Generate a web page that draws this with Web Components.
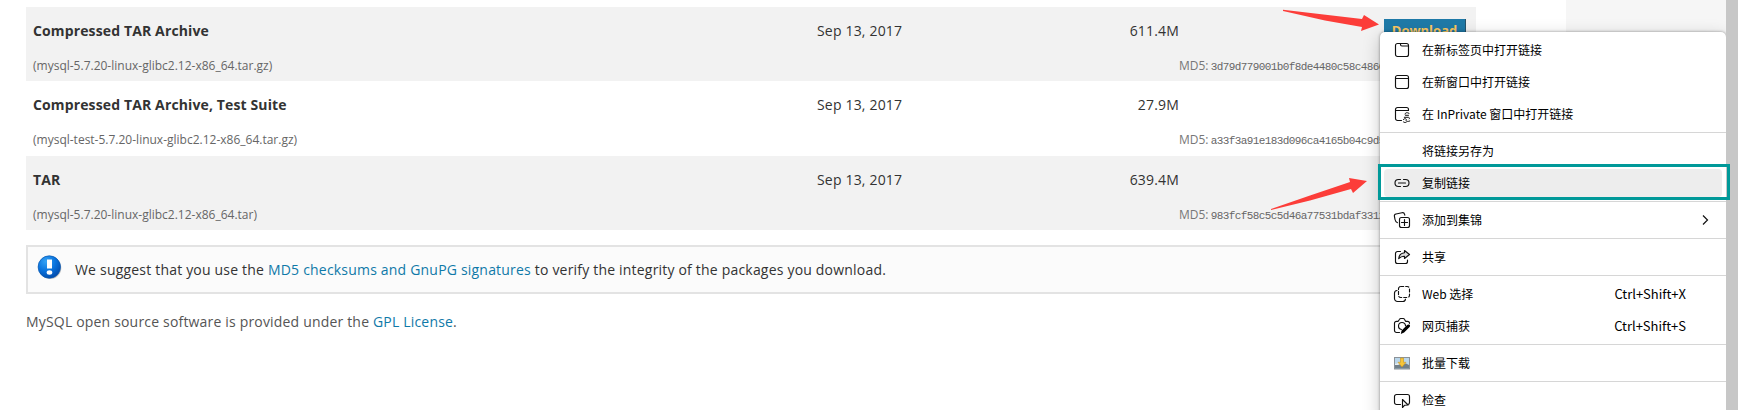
<!DOCTYPE html>
<html lang="zh-CN"><head><meta charset="utf-8"><title>MySQL Downloads</title>
<style>
html,body{margin:0;height:410px;overflow:hidden;background:#fff}
body{font:14px/20px "Open Sans","Noto Sans",sans-serif;color:#333}
</style></head><body>
<download-page></download-page>
<script>
const define=(name,html,after)=>{
  customElements.define(name,class extends HTMLElement{
    constructor(){super();const t=document.createElement('template');t.innerHTML=html;
      this.attachShadow({mode:'open'}).append(t.content.cloneNode(true));}
    connectedCallback(){if(after)after(this);}
  });
};
const S='fill="none" stroke="#111" stroke-width="1.15" stroke-linecap="round" stroke-linejoin="round"';
const icons={
 tab:`<g ${S}><rect x="1.5" y="1.5" width="13" height="13" rx="2"/><path d="M6.500 1.500v1a1.500 1.500 0 0 0 1.500 1.500h6.500"/></g>`,
 window:`<g ${S}><rect x="1.5" y="1.5" width="13" height="13" rx="2"/><path d="M1.500 4.500h13"/></g>`,
 inprivate:`<g ${S}><path d="M7.500 14.500h-4a2 2 0 0 1-2-2v-9a2 2 0 0 1 2-2h9a2 2 0 0 1 2 2v1M1.500 4.500h13"/><path stroke-width="1" d="M15 7.300c-2-1.300-4-.6-4 .8M11.500 9.300h3M10.300 11.300h3.900c1 0 1.800.7 1 1.600M9.200 13.700c1-1.700 3.800-1.200 3 .4-.6 1.200 1.500 1.900 3.600.9M9.500 16c.9.700 2 .7 2.800.2"/></g>`,
 link:`<g ${S}><path d="M6.500 4.500h-2a3.500 3.500 0 0 0 0 7h2M9.500 4.500h2a3.500 3.500 0 0 1 0 7h-2M4.500 8h7"/></g>`,
 collect:`<g ${S}><rect x="5.500" y="5.500" width="10" height="10" rx="2"/><path d="M10.500 7.500v6M7.500 10.500h6M3.500 10.700C1.800 10.200 1.300 9 1 7.500L.400 4.200C.200 3 1 2.200 2 2L8 .700c1.400-.3 2.300.4 2.600 1.600l.2.900"/></g>`,
 share:`<g ${S}><path d="M6.500 2.500h-3a2 2 0 0 0-2 2v8a2 2 0 0 0 2 2h8a2 2 0 0 0 2-2v-1.500"/><path fill="#ddd" d="M10.500 1.500 15.500 5.500 10.500 9.500v-2.200c-2.500-.2-4 .6-5.800 2.400.3-3.500 2.300-5.700 5.800-6z"/></g>`,
 select:`<g ${S}><path d="M3 4.500c-1.500.200-2.500 1-2.500 2.500v5.500a3 3 0 0 0 3 3H9c1.500 0 2.300-.8 2.500-2.300"/><rect x="4.500" y=".500" width="11" height="11" rx="2.200" stroke-dasharray="3 2"/></g>`,
 capture:`<g ${S}><path d="M5.500 14.500h-3a2 2 0 0 1-2-2V5.300a2 2 0 0 1 2-2h1.700L5.600 1.200c.2-.4.600-.7 1-.7h2.800c.5 0 .8.300 1 .7l1.200 2.100h1.900a2 2 0 0 1 2 2M7.500 11.500a3.500 3.500 0 1 1 4-3.800"/></g><path d="M15.200 6.500c1 .5 1.200 1.700.4 2.500l-5.500 5.500-3.300 1.500.8-3.500 5.500-5.400c.6-.6 1.400-.9 2.100-.6z"/>`,
 batch:`<rect x=".500" y="2.500" width="15" height="11.500" fill="#b9d6ea" stroke="#8b9298"/><path d="M1 9.500l4-2 3 2 4-1 3 1.500v3.500H1z" fill="#71808a"/><path d="M1 9l5-2 1 2-3 1H1z" fill="#e6eef2"/><path d="M6.500 3h3v4.300h2.500L8 12 4 7.300h2.500z" fill="#f7c637" stroke="#c79425" stroke-width=".6"/>`,
 inspect:`<g ${S}><path d="M6.500 12.500h-4a2 2 0 0 1-2-2v-6a2 2 0 0 1 2-2h11a2 2 0 0 1 2 2v6a2 2 0 0 1-1.600 2"/><path d="M8.500 7.500v8l2.200-2.300 3.400-.2z"/></g>`,
 none:''
};
define('package-row',`<style>
:host{display:grid;grid-template-columns:784px 120px 242px 1fr;grid-template-rows:42px 1fr;box-sizing:border-box;height:74px;padding:0 10px 0 7px;width:1450px}
:host([tall]){height:75px}:host([shade]){background:#f2f2f2}
.t{padding-top:14px;line-height:20px;white-space:nowrap;letter-spacing:.18px}
.name{font-weight:700;letter-spacing:.13px}.size{text-align:right}
.btn{text-align:right;padding-top:12px}
.f{grid-column:1/4;font-size:12px;line-height:18px;color:#666;padding-top:8px}
.m{font-size:12px;line-height:18px;color:#777;padding-top:8px;white-space:nowrap}
code{font:11px/18px "Liberation Mono",monospace;letter-spacing:-.6px;color:#666;margin-left:-1px}
</style><div class="t name"><slot name="name"></slot></div><div class="t"><slot name="date"></slot></div><div class="t size"><slot name="size"></slot></div><div class="btn"><slot name="action"></slot></div>
<div class="f"><slot name="file"></slot></div><div class="m">MD5: <code><slot name="md5"></slot></code></div>`);
define('download-button',`<style>:host{display:inline-block;box-sizing:border-box;width:82px;height:26px;background:#1f7aa8;border-right:1px solid #26536b;border-bottom:1px solid #26536b;color:#fdc861;font-size:13px;font-weight:700;line-height:22px;letter-spacing:0;text-align:center}</style><slot></slot>`);
define('info-note',`<style>:host{display:flex;box-sizing:border-box;width:1450px;height:49px;margin-top:15px;border:2px solid #e3e3e3;background:#fbfbfb;padding:8px 9px;gap:12px;line-height:29px;letter-spacing:.195px}svg{flex:none}</style>
<svg width="26" height="26" viewBox="0 0 26 26"><defs><radialGradient id="g" cx=".35" cy=".25" r=".8"><stop offset="0" stop-color="#35a3f5"/><stop offset=".55" stop-color="#0871dc"/><stop offset="1" stop-color="#034aa9"/></radialGradient></defs><circle cx="13.300" cy="13" r="11" fill="#999" opacity=".6"/><circle cx="12.300" cy="12" r="11.200" fill="url(#g)" stroke="#0757b0" stroke-width=".7"/><path d="M10 4.500h5v9h-5z" fill="#fff"/><ellipse cx="12.500" cy="17.500" rx="2.800" ry="2.200" fill="#fff"/></svg><div><slot></slot></div>`);
define('menu-item',`<style>:host{display:flex;box-sizing:border-box;height:28px;margin:2px 4px;padding:0 36px 0 10px;align-items:center;border-radius:4px;font:12px/18px "Noto Sans CJK SC",sans-serif;color:#000;white-space:nowrap;flex:none}
:host([active]){background:#ededed}svg{width:16px;height:16px;flex:none;margin-right:12px;overflow:visible}.k{margin-left:auto;font-size:13px;letter-spacing:-.02px}.l{flex:none}.c{display:none;margin:0 -26px 0 auto;width:12px}:host([more]) .c{display:block}:host([more]) .k{display:none}</style><svg viewBox="0 0 16 16" class="i"></svg><span class="l"><slot></slot></span><span class="k"><slot name="key"></slot></span><svg class="c" viewBox="0 0 12 16"><path d="M3 3.500 7.500 8 3 12.500" fill="none" stroke="#111" stroke-width="1.200"/></svg>`,e=>{
  e.shadowRoot.querySelector('.i').innerHTML=icons[e.getAttribute('icon')||'none'];
});
define('menu-line',`<style>:host{display:block;flex:none;height:1px;margin:2px 0;background:#d6d6d6}</style>`);
define('context-menu',`<style>:host{display:flex;flex-direction:column;box-sizing:border-box;width:346px;height:390px;background:#fff;border-radius:5px 5px 0 0;box-shadow:0 0 3px rgba(0,0,0,.4),0 5px 18px rgba(0,0,0,.22);padding-top:2px}</style><slot></slot>`);
define('pointer-arrow',`<style>:host{display:block}svg{display:block;overflow:visible}</style><svg width="100" height="30"><path fill="#fc3d39"/></svg>`,e=>e.shadowRoot.querySelector('path').setAttribute('d',e.getAttribute('path')));
define('download-page',`<style>
:host{display:grid;grid-template-columns:1566px 160px 12px;height:410px;position:relative;overflow:hidden}
main{padding:7px 0 0 26px;min-width:0}.side{background:#f6f6f6}.bar{background:#c7c7c7}
a{color:#0f79a8;text-decoration:none}p{margin:18px 0 0;color:#555;letter-spacing:.18px}
.menu{position:absolute;left:1380px;top:32px;clip-path:inset(-20px 0 0 -40px)}
.mark{position:absolute;left:1378px;top:164px;width:352px;height:36px;box-sizing:border-box;border:3px solid #099}
.arrows{position:absolute;left:0;top:0}
</style>
<main>
<package-row shade><span slot="name">Compressed TAR Archive</span><span slot="date">Sep 13, 2017</span><span slot="size">611.4M</span><download-button slot="action">Download</download-button><span slot="file">(mysql-5.7.20-linux-glibc2.12-x86_64.tar.gz)</span><span slot="md5">3d79d779001b0f8de4480c58c4860</span></package-row>
<package-row tall><span slot="name">Compressed TAR Archive, Test Suite</span><span slot="date">Sep 13, 2017</span><span slot="size">27.9M</span><span slot="file">(mysql-test-5.7.20-linux-glibc2.12-x86_64.tar.gz)</span><span slot="md5">a33f3a91e183d096ca4165b04c9d5</span></package-row>
<package-row shade><span slot="name">TAR</span><span slot="date">Sep 13, 2017</span><span slot="size">639.4M</span><span slot="file">(mysql-5.7.20-linux-glibc2.12-x86_64.tar)</span><span slot="md5">983fcf58c5c5d46a77531bdaf3312</span></package-row>
<info-note>We suggest that you use the <a>MD5 checksums and GnuPG signatures</a> to verify the integrity of the packages you download.</info-note>
<p>MySQL open source software is provided under the <a>GPL License</a>.</p>
</main><div class="side"></div><div class="bar"></div>
<context-menu class="menu">
<menu-item icon="tab">在新标签页中打开链接</menu-item><menu-item icon="window">在新窗口中打开链接</menu-item><menu-item icon="inprivate">在 InPrivate 窗口中打开链接</menu-item><menu-line></menu-line>
<menu-item>将链接另存为</menu-item><menu-item icon="link" active>复制链接</menu-item><menu-line></menu-line>
<menu-item icon="collect" more>添加到集锦</menu-item><menu-line></menu-line>
<menu-item icon="share">共享</menu-item><menu-line></menu-line>
<menu-item icon="select">Web 选择<span slot="key">Ctrl+Shift+X</span></menu-item><menu-item icon="capture">网页捕获<span slot="key">Ctrl+Shift+S</span></menu-item><menu-line></menu-line>
<menu-item icon="batch">批量下载</menu-item><menu-line></menu-line><menu-item icon="inspect">检查</menu-item>
</context-menu>
<div class="mark"></div>
<pointer-arrow class="arrows" path="M1283 9.800 L1362 19 1364 15 1379 24.500 1361 31 1362 27 1325 20.500 1283 11Z"></pointer-arrow>
<pointer-arrow class="arrows" path="M1271 209 L1310 195.500 1350 182 1349 178 1367 181 1353 193 1351 189 1310 200.500 1271 210Z"></pointer-arrow>`);
</script></body></html>
